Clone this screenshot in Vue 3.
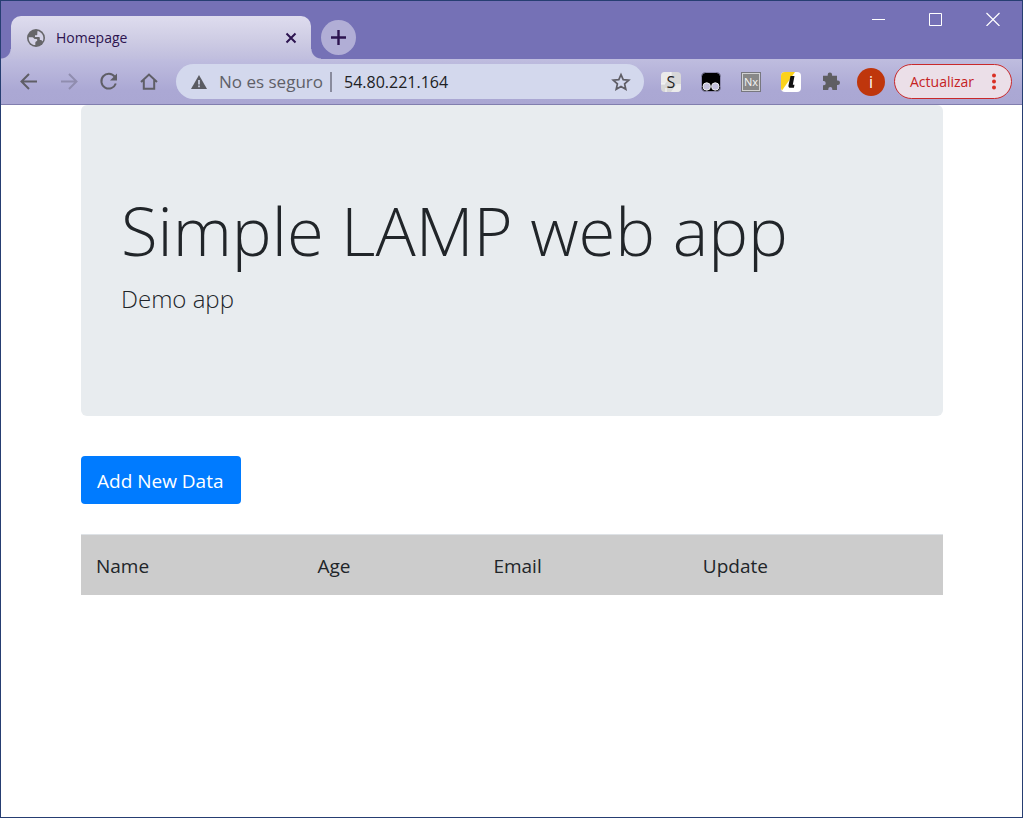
<script setup>
const columns = ['Name', 'Age', 'Email', 'Update']
</script>

<template>
  <div class="window">
    <header class="chrome">
      <div class="titlebar">
        <div class="tab">
          <svg class="globe" viewBox="0 0 20 20" aria-hidden="true">
            <circle cx="10" cy="10" r="9" fill="#66666a" />
            <path d="M2.700 9.200h3.600c1.200 0 1.500 1.700 2.700 1.700h1.300c1.300 0 1.300 1.900.2 2.300-.9.300-1.200.9-1.200 1.700v2.200c-3.800-.1-6.800-3.300-6.600-7.900zM11.500 2.900c3.500.7 5.900 3.600 5.900 7.100 0 1.400-.3 2.500-.9 3.600-.4-.9-1-1.500-1.900-1.500h-.8V10c0-.6-.5-1-1.100-1H9V7.300h1.200c.7 0 1.100-.4 1.100-1V4.900z" fill="#d5d3e8" />
          </svg>
          <span class="tab-title">Homepage</span>
          <button class="tab-close" type="button" aria-label="Close tab">
            <svg viewBox="0 0 12 12"><path d="M1.500 1.500l9 9M10.500 1.500l-9 9" stroke="#2d1450" stroke-width="2" /></svg>
          </button>
        </div>
        <button class="new-tab" type="button" aria-label="New tab">
          <svg viewBox="0 0 16 16"><path d="M7.500 0v15M0 7.500h15" stroke="#2d1450" stroke-width="2.400" /></svg>
        </button>
        <div class="controls">
          <button type="button" aria-label="Minimize">
            <svg viewBox="0 0 14 14"><path d="M0 7.500h13" stroke="#fff" /></svg>
          </button>
          <button type="button" aria-label="Maximize">
            <svg viewBox="0 0 14 14"><path d="M.5 1.500h12v12H.5z" fill="none" stroke="#fff" /></svg>
          </button>
          <button type="button" aria-label="Close">
            <svg viewBox="0 0 14 14"><path d="M.5 1l13 13M13.500 1l-13 13" stroke="#fff" stroke-width="1.200" /></svg>
          </button>
        </div>
      </div>

      <nav class="toolbar" aria-label="Browser toolbar">
        <div class="nav-buttons">
          <button type="button" aria-label="Back">
            <svg viewBox="0 0 20 20"><path d="M18 9.500H3M10 2L2.500 9.500 10 17" fill="none" stroke="#5f5e66" stroke-width="2" /></svg>
          </button>
          <button type="button" aria-label="Forward">
            <svg viewBox="0 0 20 20"><path d="M2 9.500h15M10 2l7.500 7.500L10 17" fill="none" stroke="#908daf" stroke-width="2" /></svg>
          </button>
          <button type="button" aria-label="Reload">
            <svg viewBox="0 0 20 20"><path d="M15.700 4.700A7.400 7.400 0 1 0 16.800 11.500" fill="none" stroke="#5f5e66" stroke-width="2" /><path d="M18 1.500v7h-7z" fill="#5f5e66" /></svg>
          </button>
          <button type="button" aria-label="Home">
            <svg viewBox="0 0 20 20"><path d="M2 10L10 2.500l8 7.500M4.800 8v8.800h10.400V8" fill="none" stroke="#5f5e66" stroke-width="2" /></svg>
          </button>
        </div>

        <div class="address">
          <svg class="warning" viewBox="0 0 16 14" aria-hidden="true"><path d="M8 0l8 14H0z" fill="#5a5b62" /><path d="M7.200 5h1.600v4.500H7.200zM7.200 10.600h1.600v1.600H7.200z" fill="#d3d8ed" /></svg>
          <span class="insecure">No es seguro</span>
          <span class="divider"></span>
          <input class="url" type="text" value="54.80.221.164" aria-label="Address" />
          <button class="star" type="button" aria-label="Bookmark this page">
            <svg viewBox="0 0 20 20"><path d="M10 2.600l2.200 5.100 5.600.5-4.200 3.700 1.200 5.400L10 14.400l-4.800 2.900 1.200-5.400-4.200-3.700 5.600-.5z" fill="none" stroke="#5f5e66" stroke-width="1.700" /></svg>
          </button>
        </div>

        <div class="extensions">
          <button type="button" aria-label="S extension">
            <svg viewBox="0 0 20 20"><rect width="20" height="20" rx="4" fill="#d8d8d8" /><path d="M0 4a4 4 0 0 1 4-4h6v5L4 12H0zM14 14h6v2a4 4 0 0 1-4 4h-6z" fill="#ebebeb" /><path d="M10 0v4M20 13h-5M5 20v-4M0 12h4" stroke="#f8f8f8" /><text x="10" y="15.500" text-anchor="middle" font-size="16" fill="#222">S</text></svg>
          </button>
          <button type="button" aria-label="Tampermonkey">
            <svg viewBox="0 0 20 20"><rect x=".5" y=".5" width="19" height="19" rx="4" fill="#000" stroke="#8d8aae" /><circle cx="5.700" cy="14.500" r="3.700" fill="#c4c1dc" stroke="#eee" /><circle cx="14.300" cy="14.500" r="3.700" fill="#c4c1dc" stroke="#eee" /></svg>
          </button>
          <button type="button" aria-label="Nx extension">
            <svg viewBox="0 0 20 20"><rect x=".5" y=".5" width="19" height="19" fill="#888" stroke="#77777f" /><rect x="1.500" y="1.500" width="17" height="17" fill="none" stroke="#d2d2d2" /><text x="10" y="14" text-anchor="middle" font-size="11" fill="#f4f4f4">Nx</text></svg>
          </button>
          <button type="button" aria-label="L extension">
            <svg viewBox="0 0 20 20"><rect width="20" height="20" rx="4" fill="#fff" /><path d="M4 0h10L1 18.500A4 4 0 0 1 0 16V4a4 4 0 0 1 4-4z" fill="#fbd21c" /><path d="M9.500 4h4l-1.700 8.800h1.700l-.6 3H9.700c-2 0-2.500-1.100-2.200-2.600z" fill="#111" /></svg>
          </button>
          <button type="button" aria-label="Extensions">
            <svg viewBox="0 0 20 20"><path d="M2 3.800h4.700V2.700a2.200 2.200 0 0 1 4.400 0v1.100H16v4.700h.8a2.200 2.200 0 0 1 0 4.400H16V18h-4.700v-1a2 2 0 0 0-4 0v1H2v-4.700h1a2.200 2.200 0 0 0 0-4.300H2z" fill="#5f5e62" /></svg>
          </button>
        </div>

        <button class="avatar" type="button">i</button>
        <button class="update" type="button">
          <span>Actualizar</span>
          <svg viewBox="0 0 4 18" aria-hidden="true"><circle cx="2" cy="2.500" r="2" /><circle cx="2" cy="8.500" r="2" /><circle cx="2" cy="14.500" r="2" /></svg>
        </button>
      </nav>
    </header>

    <main class="page">
      <section class="jumbotron">
        <h1>Simple LAMP web app</h1>
        <p>Demo app</p>
      </section>
      <a class="add" href="#">Add New Data</a>
      <table>
        <thead>
          <tr>
            <th v-for="column in columns" :key="column" scope="col">{{ column }}</th>
          </tr>
        </thead>
      </table>
    </main>
  </div>
</template>

<style>
body {
  margin: 0;
}
</style>

<style scoped>
* {
  box-sizing: border-box;
}
.window {
  display: flex;
  flex-direction: column;
  min-height: 100vh;
  border: 1px solid #263e72;
  background: #fff;
  color: #212529;
  font-family: "Open Sans", "Noto Sans", sans-serif;
}
button {
  display: flex;
  align-items: center;
  justify-content: center;
  padding: 0;
  border: 0;
  background: none;
  font-family: inherit;
}
svg {
  display: block;
  flex: none;
}
.chrome {
  border-bottom: 1px solid #817eae;
}
.titlebar {
  display: flex;
  height: 58px;
  padding-left: 10px;
  background: #7571b6;
}
.tab {
  position: relative;
  display: flex;
  align-items: center;
  width: 300px;
  margin-top: 15px;
  padding: 0 14px 0 15px;
  border-radius: 10px 10px 0 0;
  background: linear-gradient(#dedcee, #d0cee5 50%, #c0bede);
}
.tab::before,
.tab::after {
  content: "";
  position: absolute;
  bottom: 0;
  width: 10px;
  height: 10px;
}
.tab::before {
  right: 100%;
  background: radial-gradient(circle at 0 0, transparent 9px, #c1bfdf 10px);
}
.tab::after {
  left: 100%;
  background: radial-gradient(circle at 100% 0, transparent 9px, #c1bfdf 10px);
}
.globe {
  width: 20px;
  height: 20px;
}
.tab-title {
  flex: 1;
  margin-left: 10px;
  color: #2d1450;
  font-size: 14px;
}
.tab-close,
.tab-close svg {
  width: 12px;
  height: 12px;
}
.new-tab {
  width: 35px;
  height: 35px;
  margin: 19px 0 0 10px;
  border-radius: 50%;
  background: #b1aed6;
}
.new-tab svg {
  width: 16px;
  height: 16px;
}
.controls {
  display: flex;
  height: 36px;
  margin: 0 1px 0 auto;
}
.controls button {
  width: 57px;
}
.controls svg {
  width: 14px;
  height: 14px;
}
.toolbar {
  display: flex;
  align-items: center;
  height: 45px;
  padding: 0 10px 0 18px;
  background: linear-gradient(#bfbddf, #aba8d4 70%, #aaa7d3);
}
.nav-buttons,
.extensions {
  display: flex;
  gap: 20px;
}
.nav-buttons svg,
.extensions svg {
  width: 20px;
  height: 20px;
}
.address {
  display: flex;
  flex: 1;
  align-items: center;
  min-width: 0;
  height: 35px;
  margin: 0 17px;
  padding: 0 13px 0 15px;
  border-radius: 18px;
  background: #d3d8ed;
  font-size: 17px;
}
.warning {
  width: 16px;
  height: 14px;
}
.insecure {
  margin-left: 12px;
  color: #5f6068;
  white-space: nowrap;
}
.divider {
  width: 2px;
  height: 20px;
  margin: 0 12px 0 7px;
  background: #898b9d;
}
.url {
  flex: 1;
  min-width: 0;
  padding: 0;
  border: 0;
  background: none;
  color: #202124;
  font-family: inherit;
  font-size: 16px;
}
.star svg {
  width: 20px;
  height: 20px;
}
.avatar {
  width: 28px;
  height: 28px;
  margin: 0 9px 0 16px;
  border-radius: 50%;
  background: #bf360c;
  color: #fff;
  font-size: 16px;
}
.update {
  justify-content: space-between;
  width: 118px;
  height: 35px;
  padding: 0 15px;
  border: 1px solid #c9292b;
  border-radius: 18px;
  background: #ebdfe8;
  color: #c5221f;
  font-size: 14px;
}
.update svg {
  width: 4px;
  height: 18px;
  fill: #d93025;
}
.page {
  padding: 0 79px 40px 80px;
  font-size: 19px;
  line-height: 30px;
}
.jumbotron {
  padding: 83px 40px 99px;
  border-radius: 6px;
  background: #e8ecef;
  font-weight: 300;
}
h1 {
  margin: 0 0 8px;
  font-size: 67px;
  font-weight: 300;
  line-height: 84px;
}
p {
  margin: 0;
  font-size: 24px;
  line-height: 37px;
}
.add {
  display: inline-block;
  margin: 40px 0 30px;
  padding: 10px 17px 8px 16px;
  border-radius: 4px;
  background: #007bff;
  color: #fff;
  text-decoration: none;
}
table {
  width: 100%;
  border-collapse: separate;
  border-spacing: 0;
  table-layout: fixed;
  background: #ccc;
}
th {
  padding: 16px 15px 14px;
  border-top: 1px solid #dee2e6;
  font-weight: 400;
  text-align: left;
}
th:nth-child(1) {
  width: 25.7%;
}
th:nth-child(2) {
  width: 20.4%;
}
th:nth-child(3) {
  width: 24.3%;
}
</style>
